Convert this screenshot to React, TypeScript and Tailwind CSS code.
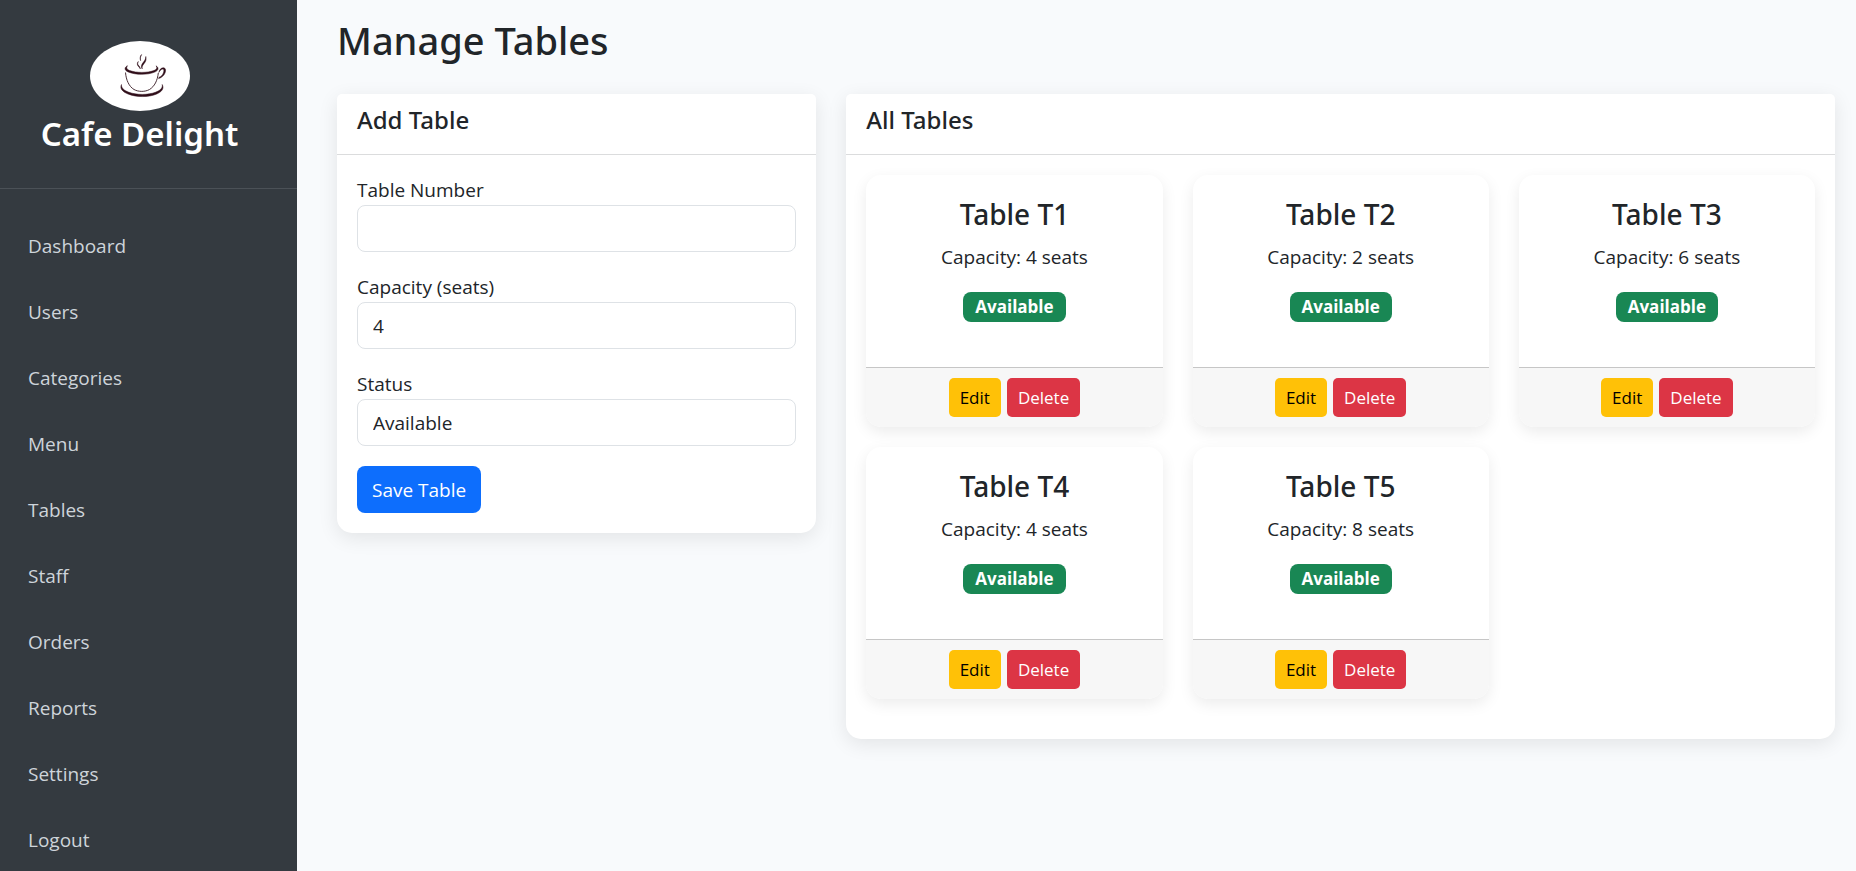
import React, { useState } from 'react'

type CafeTable = {
  name: string
  seats: number
  status: string
}

const NAV_ITEMS = [
  'Dashboard',
  'Users',
  'Categories',
  'Menu',
  'Tables',
  'Staff',
  'Orders',
  'Reports',
  'Settings',
  'Logout',
]

const TABLES: CafeTable[] = [
  { name: 'T1', seats: 4, status: 'Available' },
  { name: 'T2', seats: 2, status: 'Available' },
  { name: 'T3', seats: 6, status: 'Available' },
  { name: 'T4', seats: 4, status: 'Available' },
  { name: 'T5', seats: 8, status: 'Available' },
]

function Logo() {
  return (
    <svg viewBox="0 0 100 70" className="w-[100px] h-[70px]" aria-hidden="true">
      <ellipse cx="50" cy="35" rx="50" ry="35" fill="#fff" />
      <g fill="#2f0d18" stroke="#2f0d18" strokeWidth=".5" strokeLinejoin="round">
        {/* steam */}
        <path d="M51.6 13.500c-1 2-1.600 3.600-1 6.200-.6-2-.9-4.200 1-6.200z" />
        <path d="M55.800 15.500c.9 3.600-.4 5.500-2 7.400-1.400 1.700-2 3-1.600 5-1.500-2.600-.7-4.300.9-6.300 1.400-1.800 2.700-3.400 2.700-6.100z" />
        <path d="M48.300 20.500c-1.500 2.600.2 3.900 1.200 5 .6.800.8 1.500.8 2.400-.8-1.800-3.200-3-3-5.100.1-1 .5-1.700 1-2.300z" />
        {/* rim */}
        <path d="M37.500 24.700c-3.400 1.600-3.200 4.600.6 6.200 7.600 3.200 19.200 3.200 26.600.2 4.200-1.700 4.200-4.500 1.300-6.300 1.600 2 .9 3.600-2 4.700-6.800 2.500-17.400 2.500-24.400 0-3-1.100-3.600-2.800-2.100-4.800z" />
        {/* saucer */}
        <path d="M31.500 43.500c-2 4 1 7.300 6.500 9.500 8.300 3.400 20.300 3.400 28.200.2 5.600-2.200 8.200-5.700 6-9.700.8 3.600-2 6-6.800 7.800-7.500 2.800-18.800 2.800-26.400 0-4.800-1.700-8-4.300-7.500-7.800z" />
        {/* handle */}
        <path d="M68.800 31.500c.5-2.700 2.400-4.700 4.500-4.700 2.300 0 2.800 2.400 1.800 5-1.100 2.900-3.500 4.800-6.500 5.800l.3-1.200c2.200-.9 3.700-2.500 4.500-4.500.7-1.900.7-3.700-.6-3.800-1.300 0-2.800 1.300-4 3.400z" />
      </g>
      <path d="M35.500 31.500c.6 7.500 3.500 14 8.500 17 4.500 2.500 11 2.500 15.500 0 5-3 8-9 8.800-16.500" fill="none" stroke="#4a3038" strokeWidth="1" />
    </svg>
  )
}

function Sidebar() {
  return (
    <aside className="w-[297px] shrink-0 h-screen overflow-hidden bg-[#343a40]">
      <div className="flex flex-col items-center pt-[41px] pr-[18px] h-[189px] border-b border-[#4b5157]">
        <Logo />
        <span className="text-[33px] leading-[45px] font-semibold font-['Noto_Sans',sans-serif] text-white whitespace-nowrap">Cafe Delight</span>
      </div>
      <nav className="pt-6">
        <ul>
          {NAV_ITEMS.map(item => (
            <li key={item}>
              <a href="#" className="block px-7 py-[18px] text-[19px] leading-[30px] text-[#ced4da] hover:text-white">
                {item}
              </a>
            </li>
          ))}
        </ul>
      </nav>
    </aside>
  )
}

function Panel({ title, className = '', children }: { title: string; className?: string; children: React.ReactNode }) {
  return (
    <section className={`bg-white rounded-t-[5px] rounded-b-[15px] shadow-[0_5px_20px_rgba(0,0,0,0.09)] ${className}`}>
      <div className="px-5 pt-[11px] pb-[19px] border-b border-[#dbdcdd]">
        <h2 className="text-[24px] leading-[30px] font-medium font-['Noto_Sans',sans-serif]">{title}</h2>
      </div>
      <div className="p-5">{children}</div>
    </section>
  )
}

function AddTableForm() {
  const [number, setNumber] = useState('')
  const [capacity, setCapacity] = useState('4')
  const [status, setStatus] = useState('Available')

  const field = 'block w-full h-[47px] px-[15px] border border-[#dee2e6] rounded-[8px] bg-white appearance-none outline-none'

  return (
    <form onSubmit={e => e.preventDefault()}>
      <div className="mb-5">
        <label htmlFor="table-number" className="block">Table Number</label>
        <input id="table-number" type="text" className={field} value={number} onChange={e => setNumber(e.target.value)} />
      </div>
      <div className="mb-5">
        <label htmlFor="capacity" className="block">Capacity (seats)</label>
        <input id="capacity" type="text" inputMode="numeric" className={field} value={capacity} onChange={e => setCapacity(e.target.value)} />
      </div>
      <div className="mb-5">
        <label htmlFor="status" className="block">Status</label>
        <select id="status" className={field} value={status} onChange={e => setStatus(e.target.value)}>
          <option>Available</option>
          <option>Occupied</option>
          <option>Reserved</option>
        </select>
      </div>
      <button type="submit" className="block h-[47px] px-[15px] rounded-[8px] bg-[#0d6efd] text-white">
        Save Table
      </button>
    </form>
  )
}

function TableCard({ table }: { table: CafeTable }) {
  return (
    <article className="rounded-[15px] bg-white text-center shadow-[0_5px_15px_rgba(0,0,0,0.08)]">
      <div className="flex flex-col items-center h-48 pt-[21px]">
        <h3 className="text-[28px] leading-[36px] mb-[10px] font-medium font-['Noto_Sans',sans-serif]">Table {table.name}</h3>
        <p className="mb-5">Capacity: {table.seats} seats</p>
        <span className="px-3 rounded-[8px] bg-[#198754] text-[17px] leading-[30px] font-bold text-white">
          {table.status}
        </span>
      </div>
      <div className="flex justify-center gap-[6px] py-[10px] border-t border-[#c6c6c6] rounded-b-[15px] bg-[#f7f7f7] text-[17px]">
        <button type="button" className="h-[39px] px-[11px] rounded-[5px] bg-[#ffc107] text-black">Edit</button>
        <button type="button" className="h-[39px] px-[11px] rounded-[5px] bg-[#dc3545] text-white">Delete</button>
      </div>
    </article>
  )
}

export default function App() {
  return (
    <div className="flex min-h-screen bg-[#f8fafc] text-[#212529] text-[19px] leading-[30px] font-['Open_Sans','Noto_Sans',sans-serif]">
      <Sidebar />
      <main className="flex-1 min-w-0 pl-10 pr-[21px] pt-4">
        <h1 className="text-[38px] leading-[48px] font-medium font-['Noto_Sans',sans-serif] mb-[30px]">Manage Tables</h1>
        <div className="grid grid-cols-3 gap-[30px] items-start">
          <Panel title="Add Table">
            <AddTableForm />
          </Panel>
          <Panel title="All Tables" className="col-span-2">
            <div className="grid grid-cols-3 gap-x-[30px] gap-y-5 mb-5">
              {TABLES.map(table => (
                <TableCard key={table.name} table={table} />
              ))}
            </div>
          </Panel>
        </div>
      </main>
    </div>
  )
}
